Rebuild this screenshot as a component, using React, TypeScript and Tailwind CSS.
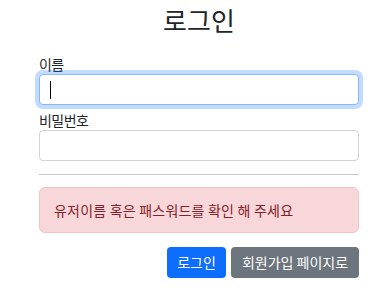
const font = { fontFamily: '"Noto Sans CJK KR", "Noto Sans", sans-serif' }

const App = () => {
  return (
    <div className="min-h-screen bg-white text-[#212529]" style={font}>
      <div className="ml-[39px] w-[320px] flex flex-col">
        <h1 className="h-[40px] text-center text-[26px] leading-[40px] font-normal">로그인</h1>

        {/* username */}
        <label className="mt-[15px] mb-[1px] text-[14px] leading-[18px] tracking-[-0.04em]">이름</label>
        <div className="h-[31px] rounded-[4px] border border-[#86b7fe] bg-white shadow-[0_0_0_4px_rgba(13,110,253,0.25)] flex items-center">
          <span className="ml-[10px] h-[18px] w-px bg-black" />
        </div>

        {/* password */}
        <label className="mt-[6px] mb-[1px] text-[14px] leading-[18px] tracking-[-0.04em]">비밀번호</label>
        <input
          type="password"
          className="h-[31px] rounded-[4px] border border-[#ced4da] bg-white px-2 text-sm outline-none"
        />

        <hr className="mt-[13px] border-0 border-t border-[#c8c9ca]" />

        <div className="mt-[12px] h-[46px] rounded-[6px] border border-[#f5c2c7] bg-[#f8d7da] px-[14px] flex items-center text-[14px] tracking-[0.015em] text-[#842029]">
          유저이름 혹은 패스워드를 확인 해 주세요
        </div>

        <div className="mt-[14px] flex justify-end gap-[5px]">
          <button className="h-[31px] w-[59px] rounded-[4px] bg-[#0d6efd] text-[14px] text-white">로그인</button>
          <button className="h-[31px] w-[128px] rounded-[4px] bg-[#6c757d] text-[14px] text-white">회원가입 페이지로</button>
        </div>
      </div>
    </div>
  )
}

export default App
